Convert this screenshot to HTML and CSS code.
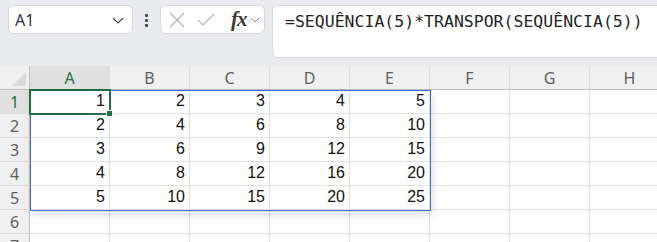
FILE: index.html
```
<!DOCTYPE html>
<html lang="pt">
<head>
  <meta charset="UTF-8">
  <link rel="stylesheet" href="styles.css">
</head>
<body>

<div class="toolbar">
  <div class="namebox">
    <span class="cell-ref">A1</span>
    <svg class="chev" width="12" height="7" viewBox="0 0 12 7"><path d="M1 1l5 5 5-5" fill="none" stroke="#444" stroke-width="1.2"/></svg>
  </div>
  <div class="dots"><i></i><i></i><i></i></div>
  <div class="fxbox">
    <svg width="16" height="16" viewBox="0 0 16 16"><path d="M1 1l14 14M15 1L1 15" stroke="#b4b4b4" stroke-width="1.2"/></svg>
    <svg width="18" height="14" viewBox="0 0 18 14"><path d="M1 7l5 5L17 1" fill="none" stroke="#b4b4b4" stroke-width="1.2"/></svg>
    <span class="fx">fx</span>
    <svg width="10" height="6" viewBox="0 0 10 6"><path d="M1 1l4 4 4-4" fill="none" stroke="#888" stroke-width="1"/></svg>
  </div>
  <div class="formula">=SEQUÊNCIA(5)*TRANSPOR(SEQUÊNCIA(5))</div>
</div>

<div class="sheet">
  <div class="grid" id="grid"></div>
  <div class="range"></div>
  <div class="active"><span class="handle"></span></div>
</div>

<script>
  const grid = document.getElementById('grid');
  const cols = ['A', 'B', 'C', 'D', 'E', 'F', 'G', 'H'];

  function addCell(cls, text) {
    const div = document.createElement('div');
    div.className = cls;
    div.textContent = text;
    grid.appendChild(div);
  }

  addCell('corner', '');
  cols.forEach(c => addCell(c === 'A' ? 'colhead sel' : 'colhead', c));

  // 7 rows visible, the last one is cut by the window edge
  for (let r = 1; r <= 7; r++) {
    addCell(r === 1 ? 'rowhead sel' : 'rowhead', r);
    for (let c = 1; c <= cols.length; c++) {
      addCell('cell', (r <= 5 && c <= 5) ? r * c : '');
    }
  }
</script>

</body>
</html>
```

FILE: styles.css
```
body {
  margin: 0;
  background-color: #ffffff;
  font-family: 'Liberation Sans', Arial, sans-serif;
  overflow: hidden;
}

.toolbar {
  display: flex;
  align-items: flex-start;
  height: 66px;
  box-sizing: border-box;
  padding: 5px 0 0 8px;
  background-color: #e9ebee;
}

.namebox {
  display: flex;
  align-items: center;
  justify-content: space-between;
  width: 125px;
  height: 29px;
  box-sizing: border-box;
  padding: 0 8px 0 6px;
  background-color: #fff;
  border: 1px solid #d6d8dc;
  border-radius: 6px;
}

.cell-ref {
  font-family: 'Noto Sans', sans-serif;
  font-size: 16px;
  color: #1d3557;
}

.chev {
  margin-top: 1px;
}

.dots {
  display: flex;
  flex-direction: column;
  align-items: center;
  gap: 2px;
  width: 27px;
  padding-top: 9px;
}

.dots i {
  width: 3px;
  height: 3px;
  background-color: #444;
  border-radius: 1px;
}

.fxbox {
  display: flex;
  align-items: center;
  width: 105px;
  height: 29px;
  box-sizing: border-box;
  padding: 0 0 0 8px;
  gap: 12px;
  background-color: #fff;
  border: 1px solid #d6d8dc;
  border-radius: 6px;
}

.fx {
  font-family: 'Liberation Serif', serif;
  font-style: italic;
  font-weight: bold;
  font-size: 21px;
  color: #3a3a3a;
  margin-left: 4px;
  margin-right: -9px;
  letter-spacing: -1px;
}

.formula {
  flex: 1;
  height: 53px;
  margin-left: 7px;
  margin-right: -10px;
  box-sizing: border-box;
  padding: 5px 0 0 12px;
  background-color: #fff;
  border: 1px solid #d6d8dc;
  border-radius: 6px;
  font-family: 'DejaVu Sans Mono', monospace;
  font-size: 16.5px;
  line-height: 22px;
  color: #1f1f1f;
  white-space: nowrap;
}

.sheet {
  position: relative;
}

.grid {
  display: grid;
  grid-template-columns: 30px repeat(8, 80px);
  grid-auto-rows: 24px;
}

.corner {
  position: relative;
  background-color: #f0f0f0;
  border-right: 1px solid #bdbdbd;
  border-bottom: 1px solid #bdbdbd;
}

.corner::after {
  content: '';
  position: absolute;
  right: 3px;
  bottom: 3px;
  border-style: solid;
  border-width: 0 0 14px 14px;
  border-color: transparent transparent #dadada transparent;
}

.colhead {
  display: flex;
  align-items: center;
  justify-content: center;
  background-color: #f0f0f0;
  border-right: 1px solid #dcdcdc;
  border-bottom: 1px solid #bdbdbd;
  font-family: 'Noto Sans', sans-serif;
  font-size: 16px;
  color: #5f5f5f;
}

.rowhead {
  display: flex;
  align-items: center;
  justify-content: center;
  background-color: #f0f0f0;
  border-right: 1px solid #bdbdbd;
  border-bottom: 1px solid #dcdcdc;
  font-family: 'Noto Sans', sans-serif;
  font-size: 16px;
  color: #5f5f5f;
}

.colhead.sel,
.rowhead.sel {
  background-color: #e0e0e0;
  color: #1e7145;
}

.cell {
  display: flex;
  align-items: flex-end;
  justify-content: flex-end;
  padding: 0 4px 3px 0;
  border-right: 1px solid #e1e1e1;
  border-bottom: 1px solid #e1e1e1;
  font-size: 16px;
  line-height: 18px;
  color: #111;
}

.range {
  position: absolute;
  left: 30px;
  top: 24px;
  width: 401px;
  height: 121px;
  box-sizing: border-box;
  border: 1px solid #3a6fc9;
  box-shadow: 2px 4px 8px rgba(0, 0, 0, 0.12);
  pointer-events: none;
}

.active {
  position: absolute;
  left: 29px;
  top: 23px;
  width: 82px;
  height: 26px;
  box-sizing: border-box;
  border: 2px solid #1e6e42;
}

.handle {
  position: absolute;
  right: -4px;
  bottom: -4px;
  width: 5px;
  height: 5px;
  background-color: #1e6e42;
  border: 1px solid #fff;
}
```
